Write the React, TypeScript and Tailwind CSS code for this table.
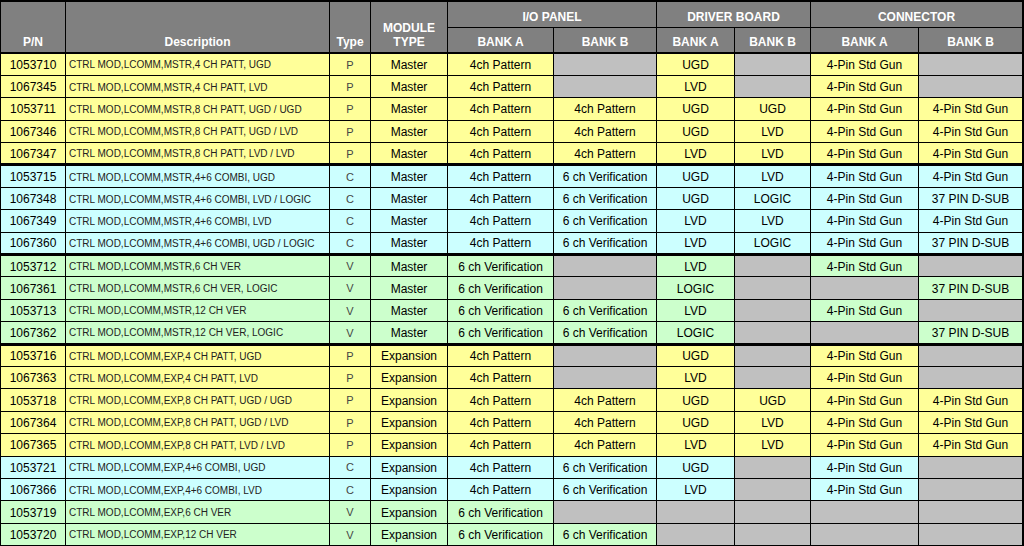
import React from "react";

type Row = {
  pn: string;
  desc: string;
  type: string;
  module: string;
  cells: (string | null)[];
  tone: "p" | "c" | "v";
  thickTop?: boolean;
};

const P4 = "4ch Pattern";
const V6 = "6 ch Verification";
const GUN = "4-Pin Std Gun";
const DSUB = "37 PIN D-SUB";

const rows: Row[] = [
  { pn: "1053710", desc: "CTRL MOD,LCOMM,MSTR,4 CH PATT, UGD", type: "P", module: "Master", cells: [P4, null, "UGD", null, GUN, null], tone: "p" },
  { pn: "1067345", desc: "CTRL MOD,LCOMM,MSTR,4 CH PATT, LVD", type: "P", module: "Master", cells: [P4, null, "LVD", null, GUN, null], tone: "p" },
  { pn: "1053711", desc: "CTRL MOD,LCOMM,MSTR,8 CH PATT, UGD / UGD", type: "P", module: "Master", cells: [P4, P4, "UGD", "UGD", GUN, GUN], tone: "p" },
  { pn: "1067346", desc: "CTRL MOD,LCOMM,MSTR,8 CH PATT, UGD / LVD", type: "P", module: "Master", cells: [P4, P4, "UGD", "LVD", GUN, GUN], tone: "p" },
  { pn: "1067347", desc: "CTRL MOD,LCOMM,MSTR,8 CH PATT, LVD / LVD", type: "P", module: "Master", cells: [P4, P4, "LVD", "LVD", GUN, GUN], tone: "p" },
  { pn: "1053715", desc: "CTRL MOD,LCOMM,MSTR,4+6 COMBI, UGD", type: "C", module: "Master", cells: [P4, V6, "UGD", "LVD", GUN, GUN], tone: "c", thickTop: true },
  { pn: "1067348", desc: "CTRL MOD,LCOMM,MSTR,4+6 COMBI, LVD / LOGIC", type: "C", module: "Master", cells: [P4, V6, "UGD", "LOGIC", GUN, DSUB], tone: "c" },
  { pn: "1067349", desc: "CTRL MOD,LCOMM,MSTR,4+6 COMBI, LVD", type: "C", module: "Master", cells: [P4, V6, "LVD", "LVD", GUN, GUN], tone: "c" },
  { pn: "1067360", desc: "CTRL MOD,LCOMM,MSTR,4+6 COMBI, UGD / LOGIC", type: "C", module: "Master", cells: [P4, V6, "LVD", "LOGIC", GUN, DSUB], tone: "c" },
  { pn: "1053712", desc: "CTRL MOD,LCOMM,MSTR,6 CH VER", type: "V", module: "Master", cells: [V6, null, "LVD", null, GUN, null], tone: "v", thickTop: true },
  { pn: "1067361", desc: "CTRL MOD,LCOMM,MSTR,6 CH VER, LOGIC", type: "V", module: "Master", cells: [V6, null, "LOGIC", null, null, DSUB], tone: "v" },
  { pn: "1053713", desc: "CTRL MOD,LCOMM,MSTR,12 CH VER", type: "V", module: "Master", cells: [V6, V6, "LVD", null, GUN, null], tone: "v" },
  { pn: "1067362", desc: "CTRL MOD,LCOMM,MSTR,12 CH VER, LOGIC", type: "V", module: "Master", cells: [V6, V6, "LOGIC", null, null, DSUB], tone: "v" },
  { pn: "1053716", desc: "CTRL MOD,LCOMM,EXP,4 CH PATT, UGD", type: "P", module: "Expansion", cells: [P4, null, "UGD", null, GUN, null], tone: "p", thickTop: true },
  { pn: "1067363", desc: "CTRL MOD,LCOMM,EXP,4 CH PATT, LVD", type: "P", module: "Expansion", cells: [P4, null, "LVD", null, GUN, null], tone: "p" },
  { pn: "1053718", desc: "CTRL MOD,LCOMM,EXP,8 CH PATT, UGD / UGD", type: "P", module: "Expansion", cells: [P4, P4, "UGD", "UGD", GUN, GUN], tone: "p" },
  { pn: "1067364", desc: "CTRL MOD,LCOMM,EXP,8 CH PATT, UGD / LVD", type: "P", module: "Expansion", cells: [P4, P4, "UGD", "LVD", GUN, GUN], tone: "p" },
  { pn: "1067365", desc: "CTRL MOD,LCOMM,EXP,8 CH PATT, LVD / LVD", type: "P", module: "Expansion", cells: [P4, P4, "LVD", "LVD", GUN, GUN], tone: "p" },
  { pn: "1053721", desc: "CTRL MOD,LCOMM,EXP,4+6 COMBI, UGD", type: "C", module: "Expansion", cells: [P4, V6, "UGD", null, GUN, null], tone: "c" },
  { pn: "1067366", desc: "CTRL MOD,LCOMM,EXP,4+6 COMBI, LVD", type: "C", module: "Expansion", cells: [P4, V6, "LVD", null, GUN, null], tone: "c" },
  { pn: "1053719", desc: "CTRL MOD,LCOMM,EXP,6 CH VER", type: "V", module: "Expansion", cells: [V6, null, null, null, null, null], tone: "v" },
  { pn: "1053720", desc: "CTRL MOD,LCOMM,EXP,12 CH VER", type: "V", module: "Expansion", cells: [V6, V6, null, null, null, null], tone: "v" },
];

const toneBg = {
  p: "bg-[#ffff99]",
  c: "bg-[#ccffff]",
  v: "bg-[#ccffcc]",
};

const th = "border border-black bg-[#808080] text-white font-bold text-[12px] text-center leading-[14px] align-bottom pb-[3px]";

export default function App() {
  return (
    <div className="w-[1024px] h-[546px] overflow-hidden bg-black font-['Liberation_Sans',Arial,sans-serif]">
      <table className="table-fixed border-collapse w-[1022px] border-t-2 border-black">
        <colgroup>
          <col className="w-[65px]" />
          <col className="w-[264px]" />
          <col className="w-[41px]" />
          <col className="w-[77px]" />
          <col className="w-[106px]" />
          <col className="w-[103px]" />
          <col className="w-[78px]" />
          <col className="w-[76px]" />
          <col className="w-[108px]" />
          <col className="w-[104px]" />
        </colgroup>
        <thead>
          <tr className="h-[26px]">
            <th rowSpan={2} className={th}>P/N</th>
            <th rowSpan={2} className={th}>Description</th>
            <th rowSpan={2} className={th}>Type</th>
            <th rowSpan={2} className={th}>
              MODULE
              <br />
              TYPE
            </th>
            <th colSpan={2} className={th}>I/O PANEL</th>
            <th colSpan={2} className={th}>DRIVER BOARD</th>
            <th colSpan={2} className={th}>CONNECTOR</th>
          </tr>
          <tr className="h-[26px] border-b-2 border-black">
            <th className={th}>BANK A</th>
            <th className={th}>BANK B</th>
            <th className={th}>BANK A</th>
            <th className={th}>BANK B</th>
            <th className={th}>BANK A</th>
            <th className={th}>BANK B</th>
          </tr>
        </thead>
        <tbody>
          {rows.map((r) => {
            const bg = toneBg[r.tone];
            const top = r.thickTop ? "border-t-[3px]" : "";
            const base = `border border-black h-[22.4px] p-0 pt-[1px] whitespace-nowrap overflow-hidden ${top}`;
            return (
              <tr key={r.pn}>
                <td className={`${base} ${bg} text-center text-[12px] text-black`}>{r.pn}</td>
                <td className={`${base} ${bg} text-left pl-[3px] text-[10px] text-[#222]`}>{r.desc}</td>
                <td className={`${base} ${bg} text-center text-[11px] text-[#444]`}>{r.type}</td>
                <td className={`${base} ${bg} text-center text-[12px] text-black`}>{r.module}</td>
                {r.cells.map((c, i) => (
                  <td
                    key={i}
                    className={`${base} ${c ? bg : "bg-[#c0c0c0]"} text-center text-[12px] text-black`}
                  >
                    {c ?? ""}
                  </td>
                ))}
              </tr>
            );
          })}
        </tbody>
      </table>
    </div>
  );
}
